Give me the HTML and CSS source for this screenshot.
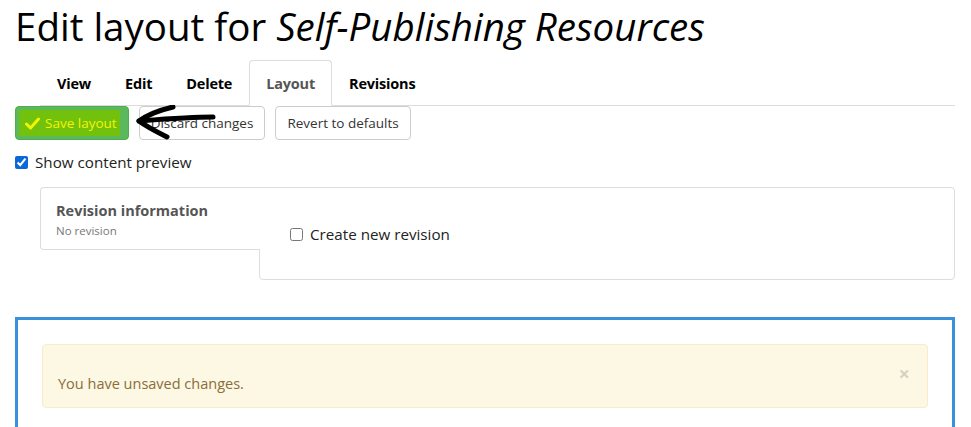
FILE: index.html
```html
<!DOCTYPE html>
<html>
<head>
  <link rel="stylesheet" href="styles.css">
</head>
<body>
  <div class="page">
    <h1 class="page-title">Edit layout for <em>Self-Publishing Resources</em></h1>

    <ul class="tabs">
      <li><a href="#">View</a></li>
      <li><a href="#">Edit</a></li>
      <li><a href="#">Delete</a></li>
      <li class="active"><a href="#">Layout</a></li>
      <li><a href="#">Revisions</a></li>
    </ul>

    <div class="actions">
      <button class="btn btn-success">
        <span class="hl">
          <svg class="check" width="15" height="13" viewBox="0 0 15 13"><path d="M1.5 7 L5.5 11 L13.5 2" fill="none" stroke="#f4f400" stroke-width="3" stroke-linecap="round" stroke-linejoin="round"/></svg>
          Save layout
        </span>
      </button>
      <button class="btn">Discard changes</button>
      <button class="btn">Revert to defaults</button>
      <!-- hand-drawn arrow on top of the screenshot -->
      <svg class="scribble" width="240" height="50" viewBox="0 0 240 50">
        <path d="M213 12 C 190 12, 165 14, 139 16" fill="none" stroke="#000" stroke-width="5" stroke-linecap="round"/>
        <path d="M173 2 C 160 5, 147 10, 139 16 C 147 22, 157 27, 167 32" fill="none" stroke="#000" stroke-width="5" stroke-linecap="round" stroke-linejoin="round"/>
      </svg>
    </div>

    <label class="check-row">
      <input type="checkbox" checked>
      Show content preview
    </label>

    <div class="vtabs">
      <div class="vtabs-menu">
        <div class="vtabs-title">Revision information</div>
        <div class="vtabs-summary">No revision</div>
      </div>
      <div class="vtabs-pane">
        <label class="check-row">
          <input type="checkbox" class="plain">
          Create new revision
        </label>
      </div>
    </div>

    <div class="layout-builder">
      <div class="alert">
        <span>You have unsaved changes.</span>
        <span class="close">&times;</span>
      </div>
    </div>
  </div>
</body>
</html>
```

FILE: styles.css
```css
* {
  margin: 0;
  padding: 0;
  box-sizing: border-box;
}
body {
  font-family: "Open Sans", "Noto Sans", sans-serif;
  color: #222;
  background: #fff;
  overflow: hidden;
}
.page {
  padding: 0 16px 0 15px;
}
.page-title {
  font-size: 38.5px;
  font-weight: 400;
  line-height: 44px;
  padding-top: 4px;
  color: #000;
}
.page-title em {
  font-style: italic;
}

/* tabs */
.tabs {
  display: flex;
  list-style: none;
  margin: 12px 0 0 25px;
  border-bottom: 1px solid #ddd;
}
.tabs li {
  margin-bottom: -1px;
}
.tabs a {
  display: block;
  padding: 11px 16px 9px;
  line-height: 24px;
  font-size: 14.5px;
  font-weight: 700;
  letter-spacing: -0.2px;
  color: #000;
  text-decoration: none;
  border: 1px solid transparent;
  border-radius: 4px 4px 0 0;
}
.tabs .active a {
  color: #555;
  background: #fff;
  border-color: #ddd #ddd transparent;
}

/* buttons */
.actions {
  position: relative;
  display: flex;
  gap: 10px;
}
.btn {
  font-family: inherit;
  font-size: 13.5px;
  line-height: 20px;
  padding: 6px 11px;
  border: 1px solid #ccc;
  border-radius: 4px;
  background: #fff;
  color: #333;
}
.btn-success {
  background: #5cb85c;
  border-color: #4cae4c;
  padding: 3px 8px 3px 3px;
}
.btn-success .hl {
  display: flex;
  align-items: center;
  gap: 5px;
  padding: 3px 3px 3px 6px;
  background: #72c10d;
  color: #f4f400;
}
.scribble {
  position: absolute;
  left: -15px;
  top: -1px;
}

/* checkboxes */
.check-row {
  display: flex;
  align-items: center;
  gap: 7px;
  font-size: 15.2px;
  line-height: 20px;
  margin-top: 12px;
}
.check-row input {
  width: 13px;
  height: 13px;
  margin: 0;
  accent-color: #0b68d8;
}

/* vertical tabs */
.vtabs {
  display: flex;
  align-items: flex-start;
  margin: 15px 0 0 25px;
}
.vtabs-menu {
  position: relative;
  z-index: 1;
  width: 220px;
  margin-right: -1px;
  padding: 13px 15px 10px;
  background: #fff;
  border: 1px solid #ddd;
  border-right: 0;
  border-radius: 4px 0 0 4px;
}
.vtabs-title {
  font-size: 14.5px;
  font-weight: 700;
  line-height: 20px;
  color: #555;
}
.vtabs-summary {
  margin-top: 2px;
  font-size: 11.5px;
  line-height: 16px;
  color: #777;
}
.vtabs-pane {
  flex: 1;
  padding: 36px 30px 35px;
  border: 1px solid #ddd;
  border-radius: 0 4px 4px 4px;
}
.vtabs-pane .check-row {
  margin-top: 0;
}
.vtabs-pane input {
  accent-color: #777;
}

/* layout builder */
.layout-builder {
  margin-top: 37px;
  border: 3px solid #3990db;
  padding: 24px 24px 60px;
}
.alert {
  display: flex;
  justify-content: space-between;
  align-items: flex-start;
  padding: 29px 15px 13px 15px;
  background: #fcf8e3;
  border: 1px solid #faebcc;
  border-radius: 4px;
  color: #8a6d3b;
  font-size: 14.5px;
  line-height: 20px;
}
.alert .close {
  font-size: 20px;
  font-weight: 700;
  line-height: 20px;
  margin: -10px 2px 0 0;
  color: #000;
  opacity: 0.15;
}
```
